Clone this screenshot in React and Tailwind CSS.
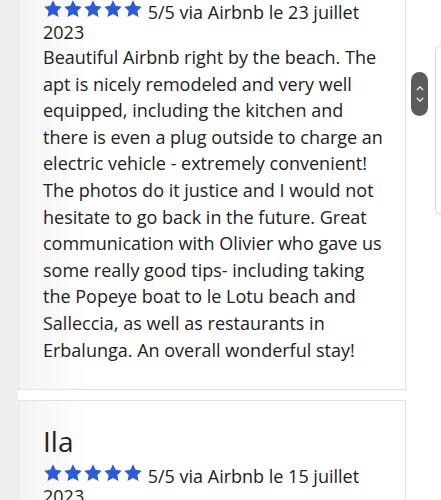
import React from 'react'

const Star = () => (
  <svg viewBox="0 0 24 24" className="inline-block w-[20px] h-[20px] align-[-3px]" fill="#2b5cd6">
    <path d="M12 1.6l3.2 6.6 7.3 1-5.3 5.1 1.4 7.2L12 18l-6.6 3.5 1.4-7.2-5.3-5.1 7.3-1z" />
  </svg>
)

const Stars = () => (
  <span className="inline-flex">
    {[0, 1, 2, 3, 4].map(i => <Star key={i} />)}
  </span>
)

const reviews = [
  {
    name: null,
    date: '23 juillet 2023',
    text: 'Beautiful Airbnb right by the beach. The apt is nicely remodeled and very well equipped, including the kitchen and there is even a plug outside to charge an electric vehicle - extremely convenient! The photos do it justice and I would not hesitate to go back in the future. Great communication with Olivier who gave us some really good tips- including taking the Popeye boat to le Lotu beach and Salleccia, as well as restaurants in Erbalunga. An overall wonderful stay!',
  },
  { name: 'Ila', date: '15 juillet 2023', text: '' },
]

export default function App() {
  return (
    <div className="relative h-[500px] overflow-hidden bg-white text-[#222] font-['Open_Sans',sans-serif]">
      <div className="flex -mt-[1px]">
        <div className="w-[18px] shrink-0 self-stretch bg-[#efefef]" />
        <div className="w-[388px] flex flex-col gap-[10px]">
          {reviews.map((r, i) => (
            <div
              key={i}
              className={`border border-[#e2e2e2] bg-[linear-gradient(to_right,#f3f3f3,#fff_70px)] pl-[24px] pr-[16px] ${
                r.name ? 'pt-[22px] pb-[24px]' : 'border-t-0 pt-0 pb-[26px]'
              }`}
            >
              {r.name && <h3 className="text-[28px] leading-[36px] mb-[4px]">{r.name}</h3>}
              <p className="text-[18px] leading-[20px]">
                <Stars /> 5/5 via Airbnb le {r.date}
              </p>
              {r.text && <p className="text-[18px] leading-[26.6px] mt-[2px]">{r.text}</p>}
            </div>
          ))}
        </div>
      </div>

      <div className="absolute left-[411px] top-[72px] w-[17px] h-[44px] rounded-full bg-[#5c5c5c] flex flex-col items-center justify-center gap-[6px]">
        <svg viewBox="0 0 10 6" className="w-[8px] h-[5px]" fill="none" stroke="#fff" strokeWidth="1.5">
          <path d="M1 5l4-4 4 4" />
        </svg>
        <svg viewBox="0 0 10 6" className="w-[8px] h-[5px]" fill="none" stroke="#fff" strokeWidth="1.5">
          <path d="M1 1l4 4 4-4" />
        </svg>
      </div>
      <div className="absolute left-[435px] top-[45px] w-[20px] h-[170px] rounded-l-[6px] border border-[#d8d8d8] bg-white" />
    </div>
  )
}
